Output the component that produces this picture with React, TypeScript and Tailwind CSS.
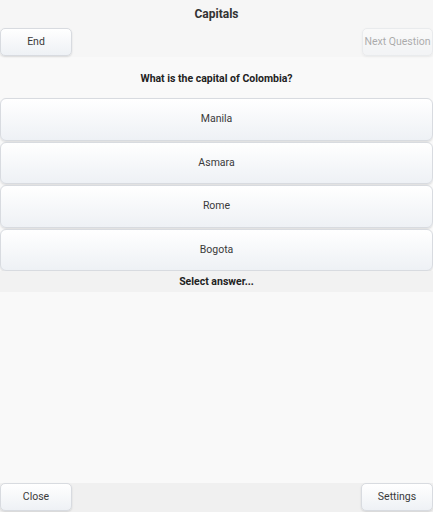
import React from "react";

const btn =
  "rounded-[5px] border border-[#d8dbe0] bg-gradient-to-b from-[#ffffff] to-[#eef1f5] text-[#3a3a3a] shadow-[0_1px_2px_rgba(0,0,0,0.12)] flex items-center justify-center whitespace-nowrap";

export default function App() {
  const answers = ["Manila", "Asmara", "Rome", "Bogota"];
  return (
    <div
      className="w-[433px] h-[512px] flex flex-col bg-[#f9f9f9] text-[#333] overflow-hidden"
      style={{ fontFamily: "Roboto, 'Noto Sans', sans-serif" }}
    >
      <div className="bg-[#f6f6f6] h-[57px] flex flex-col">
        <div className="h-[28px] flex items-center justify-center text-[12px] font-bold text-[#333]">
          Capitals
        </div>
        <div className="flex justify-between">
          <div className={`${btn} w-[72px] h-[28px] text-[10.5px]`}>End</div>
          <div className={`${btn} w-[71px] h-[28px] text-[10.5px] opacity-40`}>Next Question</div>
        </div>
      </div>
      <div className="h-[41px] pt-[2px] flex items-center justify-center text-[10.5px] font-bold text-[#222]">
        What is the capital of Colombia?
      </div>
      <div className="flex flex-col gap-[1px]">
        {answers.map((a) => (
          <div key={a} className={`${btn} h-[42.5px] text-[10.5px] rounded-[6px]`}>
            {a}
          </div>
        ))}
      </div>
      <div className="h-[21px] bg-[#f2f2f2] flex items-center justify-center text-[10.5px] font-bold text-[#222]">
        Select answer...
      </div>
      <div className="flex-1" />
      <div className="h-[29px] bg-[#f0f0f0] flex justify-between">
        <div className={`${btn} w-[72px] h-[28px] text-[10.5px]`}>Close</div>
        <div className={`${btn} w-[72px] h-[28px] text-[10.5px]`}>Settings</div>
      </div>
    </div>
  );
}
